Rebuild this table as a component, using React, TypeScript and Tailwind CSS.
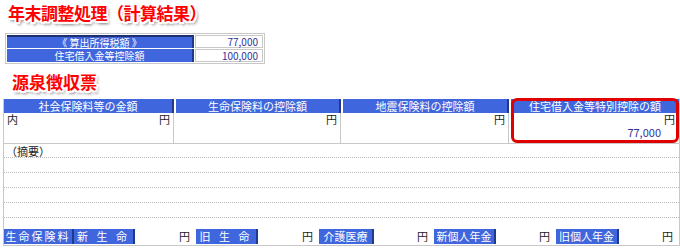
const jp = "font-['Noto_Sans_CJK_JP','Noto_Sans',sans-serif]";
const title =
  "font-bold text-[#ff0000] [text-shadow:-1.5px_-1.5px_0_#fff,1.5px_-1.5px_0_#fff,-1.5px_1.5px_0_#fff,1.5px_1.5px_0_#fff,0_2px_0_#fff,2px_0_0_#fff,0_-2px_0_#fff,-2px_0_0_#fff,2px_3px_3px_rgba(0,0,0,0.6)]";
const blue = "bg-[#3f66dc] text-white border-r-2 border-[#1f3a8c]";

function BottomLabel({ text, w }: { text: string; w: string }) {
  return (
    <div className={`${blue} ${w} h-[15px] flex items-center justify-center text-[11px] leading-none`}>{text}</div>
  );
}

function BottomValue({ w }: { w: string }) {
  return (
    <div className={`${w} h-[15px] bg-white flex items-center justify-end pr-[6px] text-[11px] leading-none text-[#222]`}>円</div>
  );
}

export default function App() {
  const lines = ["h-[15px]", "h-[15px]", "h-[15px]", "h-[15px]", "h-[12px]"];
  return (
    <div className={`${jp} w-[680px] h-[250px] bg-white overflow-hidden`}>
      <div className={`${title} text-[17px] leading-none pl-[8px] pt-[4px] h-[33px] tracking-[-0.5px]`}>年末調整処理（計算結果）</div>

      <div className="ml-[5px] w-[260px] border border-[#c8c8c8] p-[1px] flex flex-col gap-[1px] text-[10px] leading-none">
        <div className="flex gap-[1px] h-[13px]">
          <div className="w-[187px] bg-[#3f66dc] border-r-2 border-[#1f3a8c] border-t-2 border-t-[#1f2f70] text-white flex items-center justify-center">《 算出所得税額 》</div>
          <div className="flex-1 bg-white border border-[#c8c8c8] flex items-center justify-end pr-[4px] text-[#333399]">77,000</div>
        </div>
        <div className="flex gap-[1px] h-[13px]">
          <div className="w-[187px] bg-[#3f66dc] border-r-2 border-[#1f3a8c] text-white flex items-center justify-center">住宅借入金等控除額</div>
          <div className="flex-1 bg-white border border-[#c8c8c8] flex items-center justify-end pr-[4px] text-[#333399]">100,000</div>
        </div>
      </div>

      <div className={`${title} text-[17px] leading-none pl-[12px] pt-[9px] h-[35px]`}>源泉徴収票</div>

      <div className="ml-[3px] w-[677px] border-x border-b border-[#c8c8c8] text-[11px] leading-none">
        <div className="flex gap-[2px]">
          {["社会保険料等の金額", "生命保険料の控除額", "地震保険料の控除額"].map((h, i) => (
            <div key={h} className={`${i === 0 ? "w-[170px]" : i === 1 ? "w-[165px]" : "w-[166px]"} flex flex-col`}>
              <div className={`${blue} h-[14px] flex items-center justify-center`}>{h}</div>
              <div className="h-[30px] border-r border-[#c8c8c8] flex justify-between pt-[1px] px-[3px] text-[#222]">
                <span>{i === 0 ? "内" : ""}</span>
                <span>円</span>
              </div>
            </div>
          ))}
          <div className="flex-1 flex flex-col relative">
            <div className="bg-[#3f66dc] text-white h-[14px] flex items-center justify-center">住宅借入金等特別控除の額</div>
            <div className="h-[30px] flex flex-col items-end pt-[1px] pr-[4px] text-[#222] gap-[2px]">
              <span>円</span>
              <span className="text-[#333399] pr-[14px]">77,000</span>
            </div>
            <div className="absolute inset-0 -top-[1px] border-[3px] border-[#e00000] rounded-[6px] pointer-events-none" />
          </div>
        </div>

        <div className="border-t border-[#c8c8c8] pt-[2px] pl-[2px] text-[#222] h-[14px]">（摘要）</div>
        {lines.map((h, l) => (
          <div key={l} className={`${h} border-t border-dotted border-[#bbbbbb]`} />
        ))}

        <div className="flex items-center pb-[1px]">
          <div className={`${blue} w-[70px] h-[15px] flex items-center justify-center text-[11px] tracking-[2px]`}>生命保険料</div>
          <BottomLabel text="新 生 命" w="w-[61px] tracking-[3px]" />
          <BottomValue w="w-[61px]" />
          <BottomLabel text="旧 生 命" w="w-[62px] tracking-[3px]" />
          <BottomValue w="w-[61px]" />
          <BottomLabel text="介護医療" w="w-[55px]" />
          <BottomValue w="w-[60px]" />
          <BottomLabel text="新個人年金" w="w-[62px]" />
          <BottomValue w="w-[60px]" />
          <BottomLabel text="旧個人年金" w="w-[63px]" />
          <BottomValue w="flex-1" />
        </div>
      </div>
    </div>
  );
}
